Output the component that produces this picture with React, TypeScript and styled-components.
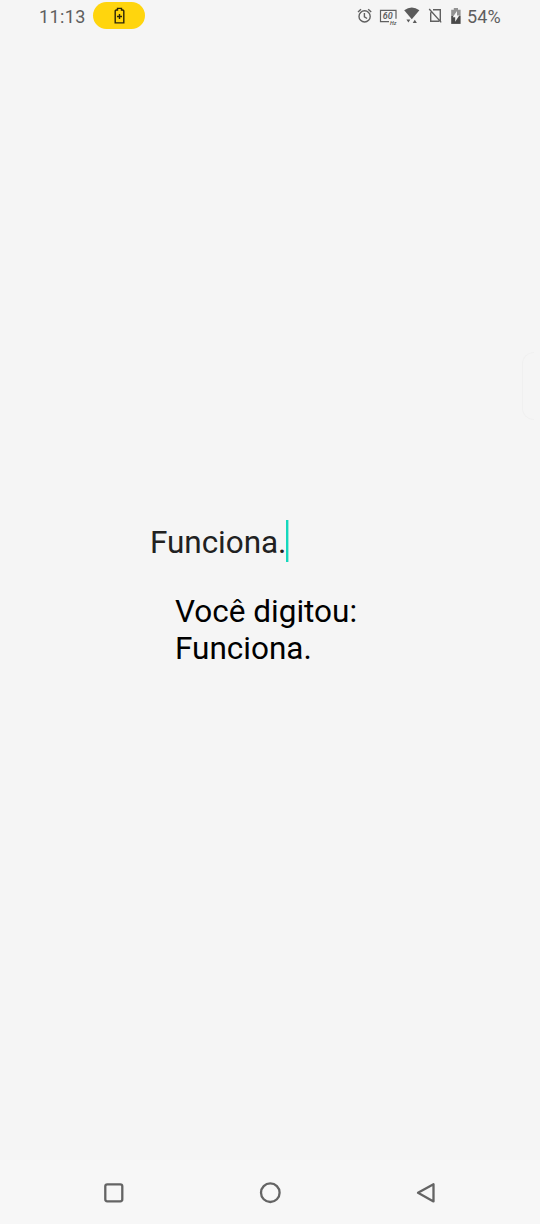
import React from "react";
import styled, { createGlobalStyle } from "styled-components";

const GlobalStyle = createGlobalStyle`
  body { margin: 0; background: #f5f5f5; }
`;

const Screen = styled.div`
  position: relative;
  display: flex;
  flex-direction: column;
  width: 540px;
  height: 1224px;
  overflow: hidden;
  background: #f5f5f5;
  font-family: Roboto, sans-serif;
`;

const StatusBar = styled.header`
  display: flex;
  justify-content: space-between;
  height: 32px;
  box-sizing: border-box;
  padding: 0 39px;
  color: #5e5e5e;
  font-size: 18px;
  line-height: 33px;
`;

const StatusLeft = styled.div`
  display: flex;
  gap: 7px;
`;

const Clock = styled.span`
  width: 47px;
  letter-spacing: 0.4px;
  white-space: nowrap;
`;

const BatteryPill = styled.span`
  display: flex;
  align-items: center;
  justify-content: center;
  width: 52px;
  height: 27px;
  margin-top: 2px;
  border-radius: 14px;
  background: #ffd50d;
`;

const StatusRight = styled.div`
  display: flex;
  align-items: flex-start;
`;

const Percent = styled.span`
  width: 34px;
  letter-spacing: 0.15px;
  white-space: nowrap;
`;

const Content = styled.main`
  display: flex;
  flex: 1;
  flex-direction: column;
  padding: 488px 0 0 150px;
  font-size: 31.5px;
  line-height: 37px;
`;

const Input = styled.div`
  display: flex;
  align-items: center;
  height: 42px;
  color: #212121;
`;

const InputText = styled.span`
  width: 136px;
  padding-top: 3px;
  letter-spacing: -0.05px;
  white-space: nowrap;
`;

const Caret = styled.span`
  width: 3px;
  height: 42px;
  background: linear-gradient(to right, #14d8bd 2px, #9ce8de 2px);
`;

const Output = styled.p`
  margin: 31px 0 0 25px;
  color: #000;
`;

const EdgeHandle = styled.div`
  position: absolute;
  top: 352px;
  right: 6px;
  width: 11px;
  height: 66px;
  border: 1px solid #f0f0f0;
  border-right: 0;
  border-radius: 12px 0 0 12px;
`;

const NavBar = styled.nav`
  display: flex;
  align-items: center;
  justify-content: space-between;
  height: 64px;
  box-sizing: border-box;
  padding: 0 102px;
  background: #f7f7f7;
`;

const NavIcon = styled.svg`
  display: block;
  fill: none;
  stroke: #646464;
  stroke-width: 2.3;
  stroke-linejoin: round;
`;

export default function App() {
  return (
    <>
      <GlobalStyle />
      <Screen>
        <StatusBar>
          <StatusLeft>
            <Clock>11:13</Clock>
            <BatteryPill>
              <svg width="12" height="18" viewBox="-0.5 0 12 18" fill="none" stroke="#2b2508" strokeWidth="1.4">
                <path d="M4 3V1.400h4V3h1.400l.9.9v12H1.700v-12l.9-.9zM6 7v5M3.500 9.500h5" />
              </svg>
            </BatteryPill>
          </StatusLeft>
          <StatusRight>
            <svg width="111" height="32" viewBox="356 0 111 32" fill="none" stroke="#606060" strokeWidth="1.4">
              <circle cx="364.600" cy="16.400" r="5.600" />
              <path d="M358 12l3-2.800M371.200 12l-3-2.800M364.400 13v3.800l2.700 1.700" />
              <path d="M389 21.600h-8.500V10.300h15.500v8.400" strokeWidth="1.200" />
              <text x="382.800" y="19.200" fill="#606060" stroke="none" fontSize="9" fontWeight="600" fontStyle="italic">60</text>
              <text x="390" y="24.600" fill="#606060" stroke="none" fontSize="5.400" fontWeight="700" fontStyle="italic">Hz</text>
              <path d="M404.200 10.300q7.600-5.600 15.200 0l-7.600 9z" fill="#5b5b5b" stroke="none" />
              <path d="M406.400 19.600h4l-2 2.900zM414.800 19.800l2.100 3.200h-4.200z" fill="#5b5b5b" stroke="none" />
              <path d="M433 9.800h7.300v11.300M430.700 12.300v9h8.500M429.200 9l12 13.400" />
              <path d="M453.800 8h4.200v1.700h2.600V16h-9.400V9.700h2.600z" fill="#929292" stroke="none" />
              <path d="M451.200 16h9.400v7.900h-9.400z" fill="#494949" stroke="none" />
              <path d="M457 11l-4.300 6.300h2.500v4.500l4.100-6.300H457z" fill="#f5f5f5" stroke="none" />
            </svg>
            <Percent>54%</Percent>
          </StatusRight>
        </StatusBar>
        <Content>
          <Input>
            <InputText>Funciona.</InputText>
            <Caret />
          </Input>
          <Output>
            Você digitou:
            <br />
            Funciona.
          </Output>
        </Content>
        <EdgeHandle />
        <NavBar>
          <NavIcon width="24" height="24" viewBox="0 0 24 24">
            <rect x="3.300" y="4.300" width="17" height="17" rx="2" />
          </NavIcon>
          <NavIcon width="24" height="24" viewBox="0 0 24 24">
            <circle cx="12.300" cy="12.700" r="9.300" />
          </NavIcon>
          <NavIcon width="24" height="24" viewBox="0 0 24 24">
            <path d="M19.500 4.200v17.200L4 12.800z" />
          </NavIcon>
        </NavBar>
      </Screen>
    </>
  );
}
